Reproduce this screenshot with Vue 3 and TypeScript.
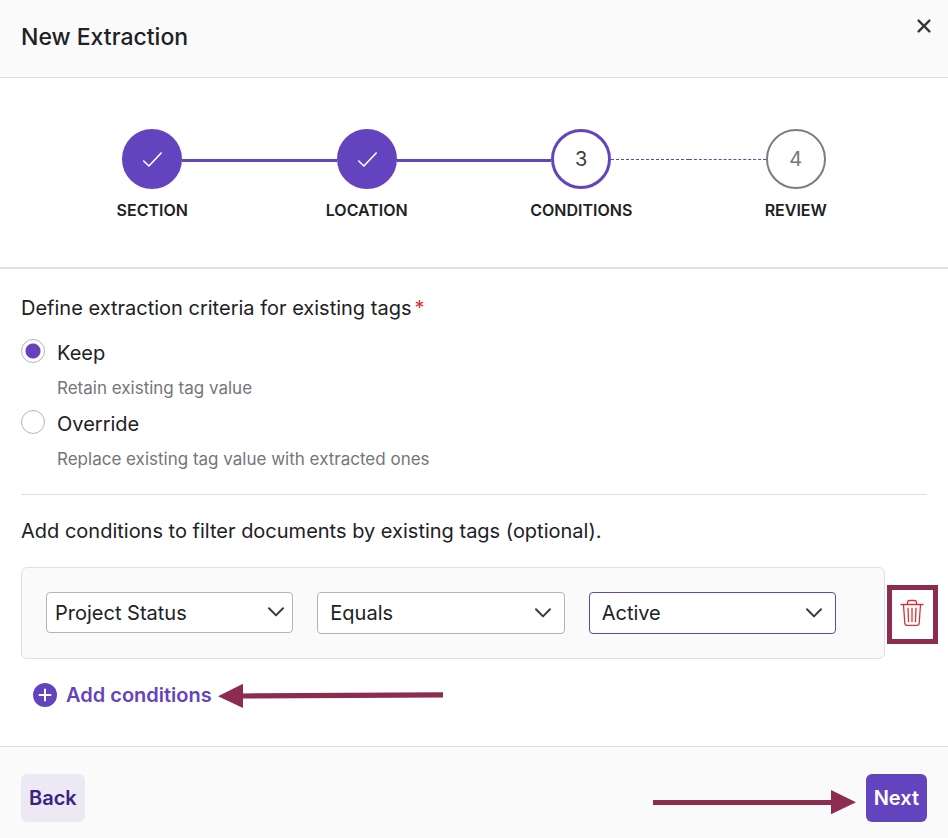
<script setup lang="ts">
import { ref } from 'vue'

interface Step {
  id: number
  label: string
  state: 'done' | 'current' | 'upcoming'
}

interface Field {
  name: string
  label: string
  options: string[]
  compact?: boolean
  active?: boolean
}

const steps: Step[] = [
  { id: 1, label: 'SECTION', state: 'done' },
  { id: 2, label: 'LOCATION', state: 'done' },
  { id: 3, label: 'CONDITIONS', state: 'current' },
  { id: 4, label: 'REVIEW', state: 'upcoming' },
]

const criteria = [
  { value: 'keep', label: 'Keep', hint: 'Retain existing tag value' },
  { value: 'override', label: 'Override', hint: 'Replace existing tag value with extracted ones' },
]

const fields: Field[] = [
  { name: 'tag', label: 'Tag', options: ['Project Status'], compact: true },
  { name: 'operator', label: 'Operator', options: ['Equals'] },
  { name: 'value', label: 'Value', options: ['Active'], active: true },
]

const selected = ref('keep')
</script>

<template>
  <main class="dialog">
    <header class="header">
      <h1 class="title">New Extraction</h1>
      <button class="close" type="button" aria-label="Close">
        <svg viewBox="0 0 16 16" width="16" height="16" aria-hidden="true">
          <path d="M2.6 2.6 13.4 13.4M13.4 2.6 2.6 13.4" />
        </svg>
      </button>
    </header>

    <ol class="stepper">
      <li v-for="step in steps" :key="step.id" class="step" :class="step.state">
        <div class="track">
          <span class="line before"></span>
          <span class="circle">
            <svg v-if="step.state === 'done'" viewBox="0 0 20 16" width="20" height="16" aria-hidden="true">
              <path d="M1.7 10 6.9 15 19.2 2" />
            </svg>
            <template v-else>{{ step.id }}</template>
          </span>
          <span class="line after"></span>
        </div>
        <span class="step-label">{{ step.label }}</span>
      </li>
    </ol>

    <div class="content">
      <fieldset class="criteria">
        <legend class="prompt">Define extraction criteria for existing tags<span class="required">*</span></legend>
        <div v-for="item in criteria" :key="item.value" class="option">
          <input :id="item.value" v-model="selected" class="radio" type="radio" name="criteria" :value="item.value" />
          <div class="option-text">
            <label :for="item.value">{{ item.label }}</label>
            <p class="hint">{{ item.hint }}</p>
          </div>
        </div>
      </fieldset>

      <h2 class="prompt">Add conditions to filter documents by existing tags (optional).</h2>

      <div class="condition">
        <div class="card">
          <div v-for="field in fields" :key="field.name" class="field" :class="{ compact: field.compact, active: field.active }">
            <select :id="field.name" :aria-label="field.label">
              <option v-for="option in field.options" :key="option">{{ option }}</option>
            </select>
            <svg class="chevron" viewBox="0 0 18 12" width="18" height="12" aria-hidden="true">
              <path d="M2 2.2 9 9.4 16 2.2" />
            </svg>
          </div>
        </div>
        <button class="remove" type="button" aria-label="Remove condition">
          <svg viewBox="1 0 23 28" width="23" height="28" aria-hidden="true">
            <path d="M1 5.5H23M7.5 5.2V3.6Q7.5 1.5 9.6 1.5H14.4Q16.5 1.5 16.5 3.6V5.2M3.5 5.8 4.8 24.2Q5 26.4 7.2 26.4H16.8Q19 26.4 19.2 24.2L20.5 5.8M8 9.2 8.6 22.6M12 9.2V22.6M16 9.2 15.4 22.6" />
          </svg>
        </button>
      </div>

      <div class="add-row">
        <button class="add" type="button">
          <svg viewBox="0 0 24 24" width="24" height="24" aria-hidden="true">
            <circle cx="12" cy="12" r="12" />
            <path d="M12 6.5V17.5M6.5 12H17.5" />
          </svg>
          Add conditions
        </button>
        <svg class="arrow" viewBox="0 0 225 24" width="225" height="24" aria-hidden="true">
          <path d="M0 13.2 25 .7V10.4L225 9.2V14.4L25 15.6V25Z" />
        </svg>
      </div>
    </div>

    <footer class="footer">
      <button class="button secondary" type="button">Back</button>
      <div class="next-group">
        <svg class="arrow" viewBox="0 0 203 24" width="203" height="24" aria-hidden="true">
          <path d="M0 10H178V0L203 12.2 178 24.2V15H0Z" />
        </svg>
        <button class="button primary" type="button">Next</button>
      </div>
    </footer>
  </main>
</template>

<style>
body {
  margin: 0;
  background: #fff;
}
</style>

<style scoped>
.dialog {
  display: flex;
  flex-direction: column;
  min-height: 100vh;
  color: #202124;
  font-family: Inter, sans-serif;
  font-size: 20px;
  line-height: 24px;
}

button,
select {
  font: inherit;
  color: inherit;
}

button {
  margin: 0;
  padding: 0;
  border: 0;
  background: none;
  cursor: pointer;
}

svg {
  display: block;
  flex: none;
}

.header {
  display: flex;
  justify-content: space-between;
  align-items: flex-start;
  padding: 17px 16px 20px 21px;
  background: #fafafa;
  border-bottom: 1px solid #e0e0e2;
}

.title {
  margin: 0;
  font-size: 23px;
  font-weight: 500;
  line-height: 40px;
}

.close {
  padding-top: 1px;
}

.close svg {
  fill: none;
  stroke: #38383b;
  stroke-width: 2.4;
  stroke-linecap: round;
}

.stepper {
  display: grid;
  grid-template-columns: repeat(4, 1fr);
  margin: 0;
  padding: 51px 45px 45px;
  border-bottom: 2px solid #e0e0e4;
  list-style: none;
}

.step {
  display: flex;
  flex-direction: column;
  gap: 9px;
  text-align: center;
}

.track {
  display: flex;
  align-items: center;
}

.circle {
  display: flex;
  flex: none;
  align-items: center;
  justify-content: center;
  box-sizing: border-box;
  width: 60px;
  height: 60px;
  border: 2px solid #7c7c82;
  border-radius: 50%;
  color: #75757a;
}

.done .circle {
  border-color: #6444be;
  background: #6444be;
}

.done svg {
  fill: none;
  stroke: #fff;
  stroke-width: 1.6;
  stroke-linecap: round;
  stroke-linejoin: round;
}

.current .circle {
  border: 3px solid #6444be;
  color: #3c3c40;
}

.line {
  flex: 1;
  height: 0;
  border-top: 3px solid #6444be;
}

.done .line,
.current .before {
  margin-top: 3px;
}

.current .after,
.upcoming .before {
  border-top: 1px dashed #6444be;
}

.step:first-child .before,
.step:last-child .after {
  visibility: hidden;
}

.step-label {
  font-size: 16px;
  font-weight: 600;
}

.content {
  flex: 1;
  padding: 27px 21px 39px;
}

.criteria {
  margin: 0 0 24px;
  padding: 0 0 23px;
  border: 0;
  border-bottom: 1px solid #e0e0e2;
}

.prompt {
  margin: 0;
  padding: 0;
  font-size: 20px;
  font-weight: 400;
}

legend.prompt {
  margin-bottom: 19px;
}

.required {
  margin-left: 3px;
  color: #d13438;
}

.option {
  display: flex;
  align-items: flex-start;
  gap: 12px;
  margin-bottom: 10px;
}

.option:last-child {
  margin-bottom: 0;
}

.radio {
  flex: none;
  box-sizing: border-box;
  width: 24px;
  height: 24px;
  margin: 0;
  border: 1px solid #b4b4b8;
  border-radius: 50%;
  background: #fff;
  appearance: none;
}

.radio:checked {
  background: radial-gradient(circle, #6444be 7px, #fff 8px);
}

.option-text {
  padding-top: 2px;
}

.option-text label {
  display: block;
}

.hint {
  margin: 11px 0 0;
  color: #75757a;
  font-size: 17px;
}

.condition {
  display: flex;
  align-items: center;
  gap: 2px;
  margin: 24px -11px 24px 0;
}

.card {
  display: grid;
  flex: 1;
  grid-template-columns: repeat(3, 1fr);
  gap: 24px;
  padding: 24px 48px 24px 24px;
  border: 1px solid #e0e0e2;
  border-radius: 6px;
  background: #fafafa;
}

.field {
  position: relative;
}

.field select {
  display: block;
  box-sizing: border-box;
  width: 100%;
  height: 42px;
  padding: 0 40px 0 12px;
  border: 1px solid #b4b4b8;
  border-radius: 4px;
  background: #fff;
  appearance: none;
}

.compact select {
  height: 41px;
  padding-left: 8px;
}

.active select {
  border-color: #6444be;
}

.chevron {
  position: absolute;
  top: 15px;
  right: 13px;
  fill: none;
  stroke: #3c3c40;
  stroke-width: 2;
  stroke-linecap: round;
  stroke-linejoin: round;
  pointer-events: none;
}

.compact .chevron {
  top: 14px;
  right: 8px;
}

.remove {
  display: flex;
  align-items: center;
  justify-content: center;
  box-sizing: border-box;
  width: 51px;
  height: 59px;
  margin-top: 2px;
  padding-bottom: 3px;
  border: 5px solid #8b2c50;
}

.remove svg {
  overflow: visible;
  fill: none;
  stroke: #d13438;
  stroke-width: 1.3;
  stroke-linecap: round;
  stroke-linejoin: round;
}

.add-row {
  display: flex;
  align-items: center;
  gap: 6px;
  padding-left: 12px;
}

.add {
  display: flex;
  align-items: center;
  gap: 9px;
  color: #6444be;
  font-weight: 600;
}

.add circle {
  fill: #6444be;
}

.add path {
  stroke: #fff;
  stroke-width: 2;
  stroke-linecap: round;
}

.arrow {
  overflow: visible;
  fill: #8b2c50;
}

.footer {
  display: flex;
  align-items: center;
  justify-content: space-between;
  padding: 27px 21px 16px;
  border-top: 1px solid #e0e0e4;
  background: #fafafa;
}

.next-group {
  display: flex;
  align-items: center;
  gap: 10px;
}

.next-group .arrow {
  margin-top: 8px;
}

.button {
  height: 48px;
  padding: 0 8px;
  border-radius: 6px;
  font-weight: 600;
}

.secondary {
  background: #ece9f5;
  color: #38247f;
}

.primary {
  background: #6444be;
  color: #fff;
}
</style>
